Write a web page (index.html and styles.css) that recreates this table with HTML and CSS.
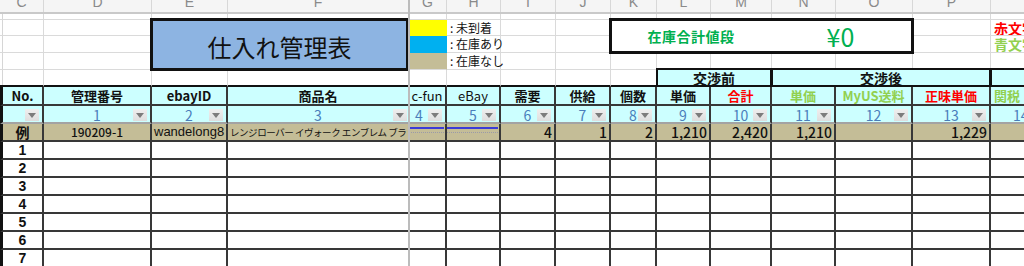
FILE: index.html
```html
<!DOCTYPE html>
<html lang="ja">
<head>
<meta charset="utf-8">
<title>仕入れ管理表</title>
<link rel="stylesheet" href="styles.css">
</head>
<body>
<div class="page">
  <div class="colhdr">
    <div><span>C</span></div><div><span>D</span></div><div><span>E</span></div><div><span>F</span></div><div><span>G</span></div><div><span>H</span></div><div><span>I</span></div><div><span>J</span></div><div><span>K</span></div><div><span>L</span></div><div><span>M</span></div><div><span>N</span></div><div><span>O</span></div><div><span>P</span></div><div><span>Q</span></div>
  </div>
  <div class="sheet">
    <!-- row 0 (partial) -->
    <div class="g c0t"></div><div class="g"></div><div class="g"></div><div class="g"></div><div class="g"></div><div class="g"></div><div class="g"></div><div class="g"></div><div class="g"></div><div class="g"></div><div class="g"></div><div class="g"></div><div class="g"></div><div class="g"></div><div class="g"></div>
    <!-- row 1 -->
    <div class="g c0t"></div><div class="g"></div>
    <div class="title">仕入れ管理表</div>
    <div class="g sw yellow"></div>
    <div class="g lbl">: 未到着</div>
    <div class="g"></div><div class="g"></div>
    <div class="stock"><span class="stock-l">在庫合計値段</span><span class="stock-r">¥0</span></div>
    <div class="g"></div>
    <div class="g note red">赤文字</div>
    <!-- row 2 -->
    <div class="g c0t"></div><div class="g"></div>
    <div class="g sw blue"></div>
    <div class="g lbl">: 在庫あり</div>
    <div class="g"></div><div class="g"></div>
    <div class="g"></div>
    <div class="g note lg">青文字</div>
    <!-- row 3 -->
    <div class="g c0t"></div><div class="g"></div>
    <div class="g sw khaki"></div>
    <div class="g lbl">: 在庫なし</div>
    <div class="g"></div><div class="g"></div><div class="g"></div><div class="g"></div><div class="g"></div><div class="g"></div><div class="g"></div><div class="g"></div><div class="g"></div>
    <!-- row 4 -->
    <div class="g hdtop c0t"></div><div class="g hdtop"></div><div class="g hdtop"></div><div class="g hdtop"></div><div class="g hdtop"></div><div class="g hdtop"></div><div class="g hdtop"></div><div class="g hdtop"></div><div class="g hdtop"></div>
    <div class="grp span2">交渉前</div>
    <div class="grp span3">交渉後</div>
    <div class="grp"></div>
    <!-- header row -->
    <div class="d h c0">No.</div>
    <div class="d h">管理番号</div>
    <div class="d h">ebayID</div>
    <div class="d h fz">商品名</div>
    <div class="d h lt">c-fun</div>
    <div class="d h lt">eBay</div>
    <div class="d h">需要</div>
    <div class="d h">供給</div>
    <div class="d h">個数</div>
    <div class="d h">単価</div>
    <div class="d h red">合計</div>
    <div class="d h lg">単価</div>
    <div class="d h lg">MyUS送料</div>
    <div class="d h red">正味単価</div>
    <div class="d h lg qh">関税</div>
    <!-- filter row -->
    <div class="d f c0"><i class="btn"></i></div>
    <div class="d f">1<i class="btn"></i></div>
    <div class="d f">2<i class="btn"></i></div>
    <div class="d f fz">3<i class="btn"></i></div>
    <div class="d f fg">4<i class="btn"></i></div>
    <div class="d f">5<i class="btn"></i></div>
    <div class="d f">6<i class="btn"></i></div>
    <div class="d f">7<i class="btn"></i></div>
    <div class="d f">8<i class="btn"></i></div>
    <div class="d f">9<i class="btn"></i></div>
    <div class="d f">10<i class="btn"></i></div>
    <div class="d f">11<i class="btn"></i></div>
    <div class="d f">12<i class="btn"></i></div>
    <div class="d f">13<i class="btn"></i></div>
    <div class="d f qf">14</div>
    <!-- example row -->
    <div class="d ex c0 rei">例</div>
    <div class="d ex ctr id">190209-1</div>
    <div class="d ex eid">wandelong8</div>
    <div class="d ex fz pname">レンジローバー イヴォーク エンブレム ブラック</div>
    <div class="d ex"><i class="shape"></i></div>
    <div class="d ex"><i class="shape"></i></div>
    <div class="d ex num">4</div>
    <div class="d ex num">1</div>
    <div class="d ex num">2</div>
    <div class="d ex num">1,210</div>
    <div class="d ex num">2,420</div>
    <div class="d ex num">1,210</div>
    <div class="d ex num"></div>
    <div class="d ex num">1,229</div>
    <div class="d ex num"></div>
    <!-- rows 1-7 -->
    <div class="d c0 rn">1</div><div class="d"></div><div class="d"></div><div class="d fz"></div><div class="d"></div><div class="d"></div><div class="d"></div><div class="d"></div><div class="d"></div><div class="d"></div><div class="d"></div><div class="d"></div><div class="d"></div><div class="d"></div><div class="d"></div>
    <div class="d c0 rn">2</div><div class="d"></div><div class="d"></div><div class="d fz"></div><div class="d"></div><div class="d"></div><div class="d"></div><div class="d"></div><div class="d"></div><div class="d"></div><div class="d"></div><div class="d"></div><div class="d"></div><div class="d"></div><div class="d"></div>
    <div class="d c0 rn">3</div><div class="d"></div><div class="d"></div><div class="d fz"></div><div class="d"></div><div class="d"></div><div class="d"></div><div class="d"></div><div class="d"></div><div class="d"></div><div class="d"></div><div class="d"></div><div class="d"></div><div class="d"></div><div class="d"></div>
    <div class="d c0 rn">4</div><div class="d"></div><div class="d"></div><div class="d fz"></div><div class="d"></div><div class="d"></div><div class="d"></div><div class="d"></div><div class="d"></div><div class="d"></div><div class="d"></div><div class="d"></div><div class="d"></div><div class="d"></div><div class="d"></div>
    <div class="d c0 rn">5</div><div class="d"></div><div class="d"></div><div class="d fz"></div><div class="d"></div><div class="d"></div><div class="d"></div><div class="d"></div><div class="d"></div><div class="d"></div><div class="d"></div><div class="d"></div><div class="d"></div><div class="d"></div><div class="d"></div>
    <div class="d c0 rn">6</div><div class="d"></div><div class="d"></div><div class="d fz"></div><div class="d"></div><div class="d"></div><div class="d"></div><div class="d"></div><div class="d"></div><div class="d"></div><div class="d"></div><div class="d"></div><div class="d"></div><div class="d"></div><div class="d"></div>
    <div class="d c0 rn">7</div><div class="d"></div><div class="d"></div><div class="d fz"></div><div class="d"></div><div class="d"></div><div class="d"></div><div class="d"></div><div class="d"></div><div class="d"></div><div class="d"></div><div class="d"></div><div class="d"></div><div class="d"></div><div class="d"></div>
  </div>
  <div class="freeze-v"></div>
</div>
</body>
</html>
```

FILE: styles.css
```css
* { box-sizing: border-box; margin: 0; padding: 0; }

html, body {
  width: 1024px;
  height: 266px;
  overflow: hidden;
  background: #ffffff;
}

body {
  font-family: "Noto Sans CJK JP", "Liberation Sans", sans-serif;
  color: #111111;
}

.page {
  position: relative;
  width: 1024px;
  height: 266px;
  overflow: hidden;
}

/* column letters */
.colhdr {
  display: grid;
  grid-template-columns: 44px 108px 76px 181px 38px 54px 55px 55px 46px 54px 61px 64px 77px 78px 80px;
  height: 14px;
  background: #f5f5f5;
  border-bottom: 2px solid #c9c9c9;
  overflow: hidden;
}

.colhdr div {
  border-right: 1px solid #d8d8d8;
  text-align: center;
  font: 14px/14px "Liberation Sans", sans-serif;
  color: #8a8a8a;
  overflow: hidden;
}

.colhdr span {
  display: block;
  margin-top: -5px;
}

/* sheet grid */
.sheet {
  display: grid;
  grid-template-columns: 44px 108px 76px 181px 38px 54px 55px 55px 46px 54px 61px 64px 77px 78px 80px;
  grid-template-rows: 6px 16px 17px 17px 17px 19px 18px 18px repeat(7, 18px);
}

.g {
  border-right: 1px solid #dadada;
  border-bottom: 1px solid #dadada;
}

.c0t {
  background: linear-gradient(to right, transparent 2px, #d6d6d6 2px, #d6d6d6 3px, transparent 3px);
}

.hdtop {
  border-bottom: 2px solid #111111;
}

/* title box */
.title {
  grid-column: span 2;
  grid-row: span 3;
  margin: -2px 0 -1px -2px;
  border: 3px solid #111111;
  background: #8db4e2;
  display: flex;
  align-items: center;
  justify-content: center;
  padding-top: 3px;
  font-size: 24px;
  color: #111111;
  position: relative;
  z-index: 1;
}

/* legend */
.sw { border-right-color: transparent; }
.yellow { background: #ffff00; border-bottom-color: transparent; }
.blue { background: #00b0f0; border-bottom-color: transparent; }
.khaki { background: #c4bd97; }

.lbl {
  font-size: 12px;
  line-height: 16px;
  padding-left: 3px;
  white-space: nowrap;
  color: #111111;
}

/* stock total */
.stock {
  grid-column: span 5;
  grid-row: span 2;
  margin: -2px -1px -1px -2px;
  border: 3px solid #111111;
  background: #ffffff;
  display: flex;
  align-items: center;
  color: #00b050;
  position: relative;
  z-index: 1;
}

.stock-l {
  width: 158px;
  text-align: center;
  font-size: 14px;
  font-weight: 700;
  letter-spacing: 0.5px;
}

.stock-r {
  flex: 1;
  text-align: center;
  font-size: 25px;
  line-height: 30px;
}

.note {
  font-size: 14px;
  font-weight: 700;
  line-height: 16px;
  padding-left: 3px;
  white-space: nowrap;
  overflow: hidden;
}

.red { color: #ff0000; }
.lg { color: #92d050; }

/* group header */
.grp {
  background: #ccffff;
  border: 2px solid #111111;
  margin: -2px 0 0 -1px;
  font-size: 14px;
  font-weight: 700;
  line-height: 14px;
  display: flex;
  align-items: center;
  justify-content: center;
}

.span2 { grid-column: span 2; }
.span3 { grid-column: span 3; }

/* data cells */
.d {
  border-right: 2px solid #383838;
  border-bottom: 2px solid #383838;
  white-space: nowrap;
  overflow: hidden;
}

.c0 { border-left: 3px solid #111111; }
.fz { border-right: 1px solid #bbbbbb; }

.h {
  background: #ccffff;
  font-size: 13px;
  font-weight: 700;
  line-height: 17px;
  text-align: center;
}

.h.lt { font-weight: 400; font-size: 13px; }
.h.qh { text-align: left; padding-left: 3px; }

.f {
  position: relative;
  background: #ccffff;
  color: #4a7ebb;
  font-size: 14px;
  line-height: 16px;
  text-align: center;
  border-bottom: 2px solid #a3a3a3;
  padding-top: 1px;
}

.f.fg { text-align: left; padding-left: 6px; }
.f.qf { text-align: left; padding-left: 22px; }

.btn {
  position: absolute;
  right: 3px;
  top: 3px;
  width: 14px;
  height: 12px;
  background: linear-gradient(#efefef, #dedede);
}

.fz .btn { right: 1px; }

.btn::after {
  content: "";
  position: absolute;
  left: 3px;
  top: 4px;
  border-left: 4px solid transparent;
  border-right: 4px solid transparent;
  border-top: 5px solid #7c7c7c;
}

.ex {
  background: #c4bd97;
  position: relative;
  line-height: 16px;
}

.rei {
  text-align: center;
  font-size: 14px;
  font-weight: 700;
}

.ctr { text-align: center; }

.id { font-size: 12px; font-weight: 500; }

.eid {
  font-family: "Liberation Sans", "Noto Sans CJK JP", sans-serif;
  font-size: 13px;
  padding-left: 2px;
}

.pname {
  font-size: 9.5px;
  letter-spacing: -0.45px;
  padding-left: 2px;
}

.num {
  text-align: right;
  padding-right: 2px;
  font-size: 14px;
  font-weight: 500;
}

.shape {
  position: absolute;
  left: 0;
  right: 1px;
  top: 3px;
  height: 6px;
  border-top: 2px solid #3b3bd6;
  border-bottom: 1px dotted #9a9aa8;
}

.rn {
  text-align: center;
  font-family: "Liberation Sans Narrow", "Liberation Sans", sans-serif;
  font-size: 14px;
  font-weight: 700;
  line-height: 16px;
}

/* frozen-pane divider */
.freeze-v {
  position: absolute;
  left: 408px;
  top: 0;
  width: 2px;
  height: 266px;
  background: #bcbcbc;
  z-index: 5;
}
```
